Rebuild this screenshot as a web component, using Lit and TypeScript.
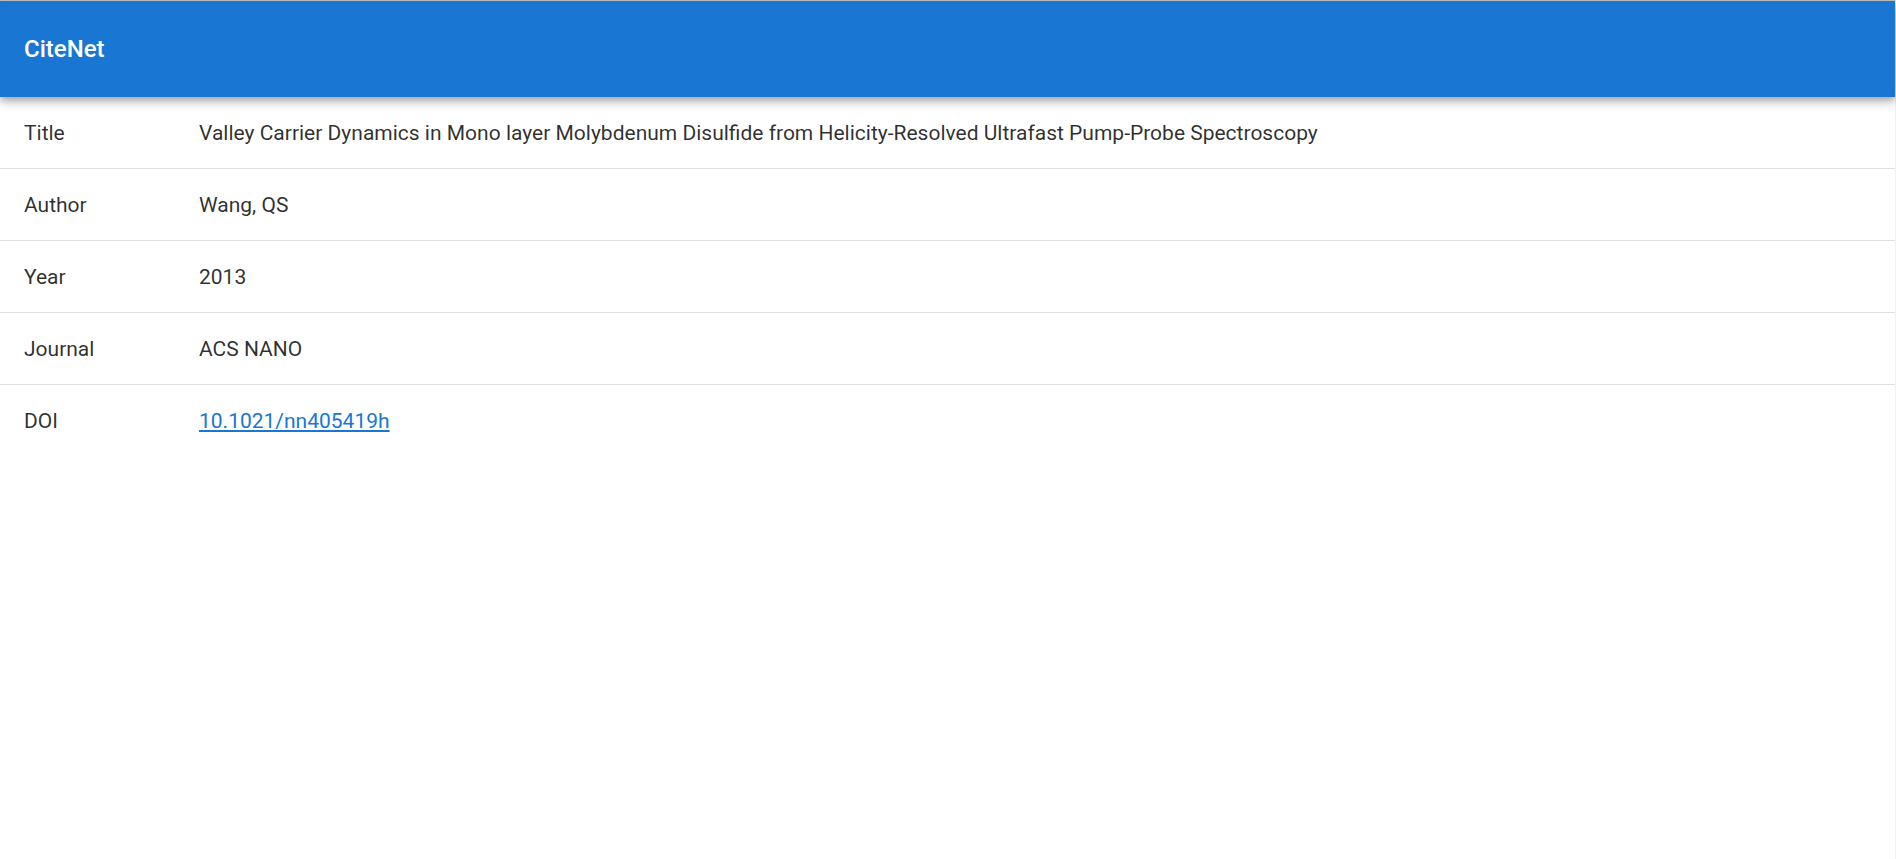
import { LitElement, html, css } from "lit";
import { customElement } from "lit/decorators.js";

@customElement("app-root")
export class AppRoot extends LitElement {
  static styles = css`
    :host {
      display: block;
      min-height: 100vh;
      box-sizing: border-box;
      border-top: 1px solid #c4c4c4;
      border-right: 1px solid #f0f0f0;
      background: #fff;
      color: rgba(0, 0, 0, 0.82);
      font-family: Roboto, sans-serif;
      font-size: 21px;
      line-height: 31px;
    }
    .bar {
      position: relative;
      display: flex;
      align-items: center;
      min-height: 96px;
      padding: 0 24px;
      background: #1976d2;
      color: #fff;
      box-shadow:
        0 3px 6px -1px rgba(0, 0, 0, 0.2),
        0 6px 8px 0 rgba(0, 0, 0, 0.14),
        0 2px 15px 0 rgba(0, 0, 0, 0.12);
    }
    .brand {
      margin: 0;
      font-size: 24px;
      font-weight: 500;
      line-height: 38px;
    }
    .details {
      width: 100%;
      border-spacing: 0;
    }
    .label,
    .value {
      padding: 21px 24px 19px;
      border-bottom: 1px solid #e0e0e0;
      font-weight: 400;
      text-align: left;
    }
    .row:last-child > * {
      border-bottom: 0;
    }
    .label {
      width: 127px;
    }
    .link {
      color: #1976d2;
      text-decoration: underline;
    }
  `;

  private fields = [
    ["Title", "Valley Carrier Dynamics in Mono layer Molybdenum Disulfide from Helicity-Resolved Ultrafast Pump-Probe Spectroscopy"],
    ["Author", "Wang, QS"],
    ["Year", "2013"],
    ["Journal", "ACS NANO"],
    ["DOI", html`<a class="link" href="https://doi.org/10.1021/nn405419h">10.1021/nn405419h</a>`],
  ];

  render() {
    return html`
      <header class="bar"><h1 class="brand">CiteNet</h1></header>
      <main>
        <table class="details">
          <tbody>
            ${this.fields.map(
              ([label, value]) => html`<tr class="row">
                <th class="label" scope="row">${label}</th>
                <td class="value">${value}</td>
              </tr>`
            )}
          </tbody>
        </table>
      </main>
    `;
  }
}
